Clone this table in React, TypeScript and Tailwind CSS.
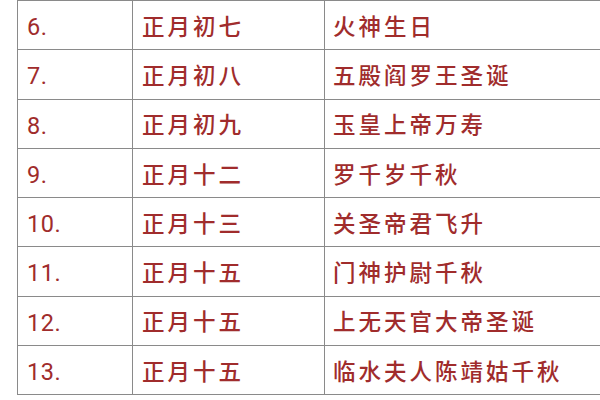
import React from "react";

const rows: [string, string, string][] = [
  ["6.", "正月初七", "火神生日"],
  ["7.", "正月初八", "五殿阎罗王圣诞"],
  ["8.", "正月初九", "玉皇上帝万寿"],
  ["9.", "正月十二", "罗千岁千秋"],
  ["10.", "正月十三", "关圣帝君飞升"],
  ["11.", "正月十五", "门神护尉千秋"],
  ["12.", "正月十五", "上无天官大帝圣诞"],
  ["13.", "正月十五", "临水夫人陈靖姑千秋"],
];

export default function App() {
  return (
    <div
      className="w-[600px] h-[400px] overflow-hidden bg-white"
      style={{ fontFamily: "Roboto, 'Noto Sans CJK SC', sans-serif" }}
    >
      <div className="ml-[17px] w-[700px] border-l-[1.5px] border-t-[1.5px] border-[#8a8a8a] text-[#a02c2c]">
        {rows.map((r, i) => (
          <div
            key={i}
            className="grid grid-cols-[115px_192px_1fr] h-[49.25px] border-b-[1.5px] border-[#8a8a8a]"
          >
            <div className="flex items-center pl-[9px] pt-[5px] text-[23.5px] tracking-[0.5px] border-r-[1.5px] border-[#8a8a8a]">
              {r[0]}
            </div>
            <div className="flex items-center pl-[9px] pt-[5px] text-[22.5px] font-medium tracking-[3px] border-r-[1.5px] border-[#8a8a8a]">
              {r[1]}
            </div>
            <div className="flex items-center pl-[8px] pt-[5px] text-[22.5px] font-medium tracking-[3px]">
              {r[2]}
            </div>
          </div>
        ))}
      </div>
    </div>
  );
}
